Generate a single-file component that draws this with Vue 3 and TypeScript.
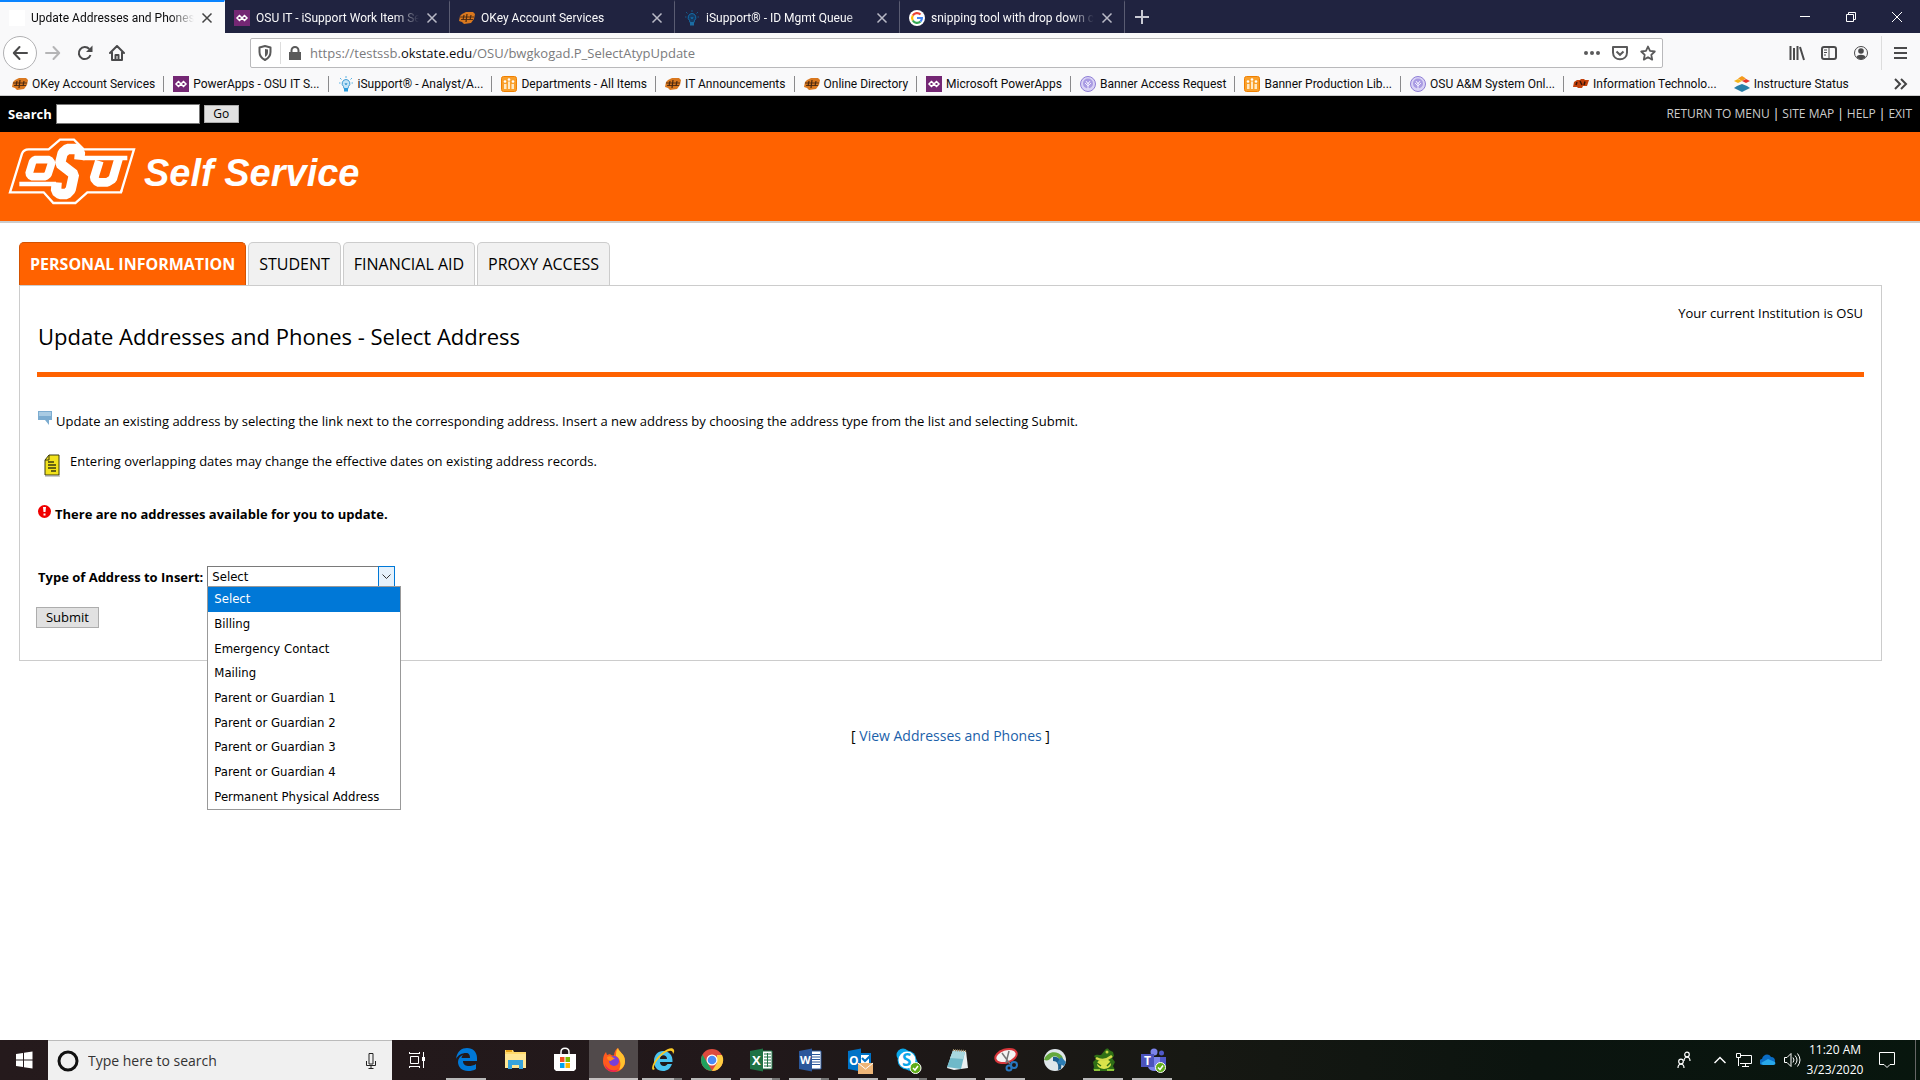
<script setup lang="ts">
import { ref } from 'vue'

interface BrowserTab { icon: string; title: string }
interface Bookmark { icon: string; title: string }
interface TaskApp { icon: string; name: string; open: boolean; stacked?: boolean; active?: boolean }

const okey = '<path d="M3 4l4-2h7l2 2-1 5-3 4-7 1-2-2-3-1 1-5z" fill="#d9781f"/><path d="M1 7h14M2 9.500h12" stroke="#5a3113" stroke-width="1.200"/><path d="M5 5l-1 5M8 4L7 12M12 5l-1 5" stroke="#4a2a12" stroke-width="1.200"/>'
const power = '<path d="M0 0h16v16H0z" fill="#742774"/><path d="M5.500 5.500L3 8l2.500 2.500L8 8zM10.500 5.500L8 8l2.500 2.500L13 8z" fill="none" stroke="#fff" stroke-width="1.500"/>'
const bulb = '<path d="M8 3.500a4 4 0 0 1 2.500 7l-.5 2H6l-.5-2A4 4 0 0 1 8 3.500z" fill="#c3e4f7" stroke="#3d9bd4"/><path d="M6 12h4v3.500H6z" fill="#2b9bdc"/><path d="M7 7l1 2 1-2" fill="none" stroke="#3d9bd4"/><path d="M8 0v2M2 2l1.500 1.500M14 2l-1.500 1.500M1 7h1.500M13.500 7H15" stroke="#5db4e4"/>'
const depts = '<rect x=".5" y=".5" width="15" height="15" rx="2" fill="#f9a02c" stroke="#f08000"/><path d="M3 13V8h2.500v5zM7 13V5.500h2V13zM10.500 13V8H13v5z" fill="#ffe9c6"/><circle cx="4" cy="5.500" r="1.300" fill="#fff"/><circle cx="8" cy="3.500" r="1.300" fill="#fff"/><circle cx="12" cy="5.500" r="1.300" fill="#fff"/>'
const seal = '<circle cx="8" cy="8" r="7.500" fill="#d9d2f5" stroke="#8f7ed6"/><circle cx="8" cy="7.500" r="5" fill="#a99be3"/><path d="M8 13V6M8 10L5 7M8 10l3-3M8 8L6 5M8 8l2-3" stroke="#efebff"/>'

const icons: Record<string, string> = {
  blank: '<path d="M0 0h16v16H0z" fill="#fff"/>',
  okey,
  power,
  bulb,
  depts,
  seal,
  bulbDark: '<path d="M8 3.500a4 4 0 0 1 2.500 7l-.5 2H6l-.5-2A4 4 0 0 1 8 3.500z" fill="#173a62" stroke="#1270ad"/><path d="M6 12h4v3.500H6z" fill="#1b6ca3"/><path d="M7 7l1 2 1-2" fill="none" stroke="#1270ad"/><path d="M8 0v2M2 2l1.500 1.500M14 2l-1.500 1.500M1 7h1.500M13.500 7H15" stroke="#155a89"/>',
  google: '<circle cx="8" cy="8" r="8" fill="#fff"/><g fill="none" stroke-width="2.200"><path d="M11.500 4.500A4.900 4.900 0 0 0 3.800 5.500" stroke="#ea4335"/><path d="M3.800 5.500a4.900 4.900 0 0 0 0 5" stroke="#fbbc05"/><path d="M3.800 10.500a4.900 4.900 0 0 0 7.700 1" stroke="#34a853"/><path d="M11.500 11.500A4.900 4.900 0 0 0 12.900 8H8" stroke="#4285f4"/></g>',
  brand: '<path d="M1 6l3-2h3l1-1h3l1 1h4l-2 6h-4l-1 2H5l-1-1H0z" fill="#c2410c"/><path d="M4 6l-1 3M7 5l2 4M12 5.500l-1 3.500" stroke="#3c1508" stroke-width="1.500"/>',
  instructure: '<path d="M8 0l4 2.500L8 5 4 2.500z" fill="#f59a1b"/><path d="M4 3l4 2-4 2-4-2z" fill="#f4b41a"/><path d="M12 3l4 2-4 2-4-2z" fill="#e6352c"/><path d="M3 10l5-2 5 2 3 2-8 4-8-4z" fill="#287ea8"/>',

  start: '<path d="M0 3l7-1v6.500H0zM8 1.800L16.500.5v8H8zM0 9.500h7V16l-7-1zM8 9.500h8.500v8L8 16.200z" fill="#fff"/>',
  edge: '<path d="M1 11C2 3 7 0 12 0c6 0 10 4 10 10v3H8c0 4 3 5 6 5 2 0 5-.5 7-2v5c-2 1.500-5 2-8 2-6 0-10-4-10-9 0-3 2-6 5-7-1 1-1.500 2-1.500 3H15c0-3-1-5-4-5C7 5 3 7 1 11z" fill="#0078d7"/>',
  explorer: '<path d="M1 2h8l1 2h12v16H1z" fill="#ffd96b"/><path d="M2 2h6v2H2z" fill="#e8a317"/><path d="M1 6h21v14H1z" fill="#ffe694"/><path d="M4 21v-9h15v9h-4v-4H8v4z" fill="#36a3dc"/>',
  store: '<path d="M8 7V4c0-5 8-5 8 0v3" fill="none" stroke="#fff" stroke-width="1.500"/><path d="M1 6h22v15l-2 2H3l-2-2z" fill="#fff"/><path d="M7 9h4.500v5H7z" fill="#f25022"/><path d="M12.500 9H17v5h-4.500z" fill="#7fba00"/><path d="M7 15h4.500v5H7z" fill="#00a4ef"/><path d="M12.500 15H17v5h-4.500z" fill="#ffb900"/>',
  firefox: '<path d="M12 24C5 24 1 19 1 13c0-4 1-7 3-9l1 3 3-1c1 1 2 1.500 4 1.500C12 4 14 1 16 0c1 4 7 6 7 13 0 6-4 11-11 11z" fill="#ff5a1f"/><path d="M16 0c1 4 7 6 7 13 0 5-3 8-6 9 3-6 1-12-3-14 0-3 0-6 2-8z" fill="#ffc22e"/><path d="M3 16c2 6 9 8 14 5l-4 3C7 24 3 21 3 16z" fill="#e51d5b"/><circle cx="12" cy="13" r="5" fill="#7a3fd8"/><path d="M5 9c3-2 6 0 8 2-3 0-3 2-5 2-2-1-3-2-3-4z" fill="#ff8a1c"/>',
  ie: '<path d="M12 3c6 0 10 4 9.500 11H9c0 5 6 5 7.500 2H21c-2 5-5 7-9 7-6 0-9-4-9-10S7 3 12 3zM9 11h7c0-5-7-5-7 0z" fill="#49c4f2"/><path d="M2 22C-1 20 4 10 12 4c5-4 10-5 11-2 .5 1 0 3-1 4 0-6-7-3-12 2C5 13 1 20 4 21z" fill="#fbc926"/>',
  chrome: '<circle cx="12" cy="12" r="11" fill="#dd4b3e"/><path d="M2.500 6.500L8 16l4 7A11 11 0 0 1 2.500 6.500z" fill="#1fa15d"/><path d="M12 23l5-8V7h5a11 11 0 0 1-10 16z" fill="#ffcd42"/><circle cx="12" cy="12" r="5.500" fill="#fff"/><circle cx="12" cy="12" r="4.300" fill="#4c8bf5"/>',
  excel: '<path d="M12 3h11v18H12z" fill="#fff" stroke="#1f7244"/><path d="M15 6h7M15 9h7M15 12h7M15 15h7M15 18h7M18.500 5v14" stroke="#1f7244"/><path d="M1 3l13-2.500v23L1 21z" fill="#1f7244"/><text x="3" y="16.500" font-family="Open Sans, sans-serif" font-weight="700" font-size="13" fill="#fff">X</text>',
  word: '<path d="M12 3h11v18H12z" fill="#fff" stroke="#2b579a"/><path d="M14 6.500h8M14 9h8M14 11.500h8M14 14h8M14 16.500h8" stroke="#2b579a"/><path d="M1 3l13-2.500v23L1 21z" fill="#2b579a"/><text x="2" y="16" font-family="Open Sans, sans-serif" font-weight="700" font-size="11" fill="#fff">W</text>',
  outlook: '<path d="M12 6h11v12H12z" fill="#fff"/><path d="M12 6h11v12H12zM15 10l3 3 5-5" fill="none" stroke="#0072c6" stroke-width="2"/><path d="M1 3l13-2.500v23L1 21z" fill="#0072c6"/><text x="2" y="16.500" font-family="Open Sans, sans-serif" font-weight="700" font-size="12" fill="#fff">O</text><path d="M11 15h15v11H11z" fill="#eeb678"/><path d="M11 15l7.500 6 7.500-6" fill="none" stroke="#fff"/>',
  skype: '<circle cx="7" cy="7" r="6.500" fill="#0aa7ea"/><circle cx="15" cy="16" r="7" fill="#0aa7ea"/><circle cx="11" cy="12" r="9.500" fill="#0aa7ea"/><circle cx="11" cy="12" r="8.500" fill="#fff"/><text x="6" y="18" font-family="Open Sans, sans-serif" font-weight="700" font-size="17" fill="#0aa7ea">S</text><circle cx="19.500" cy="20" r="5.500" fill="#5fad18" stroke="#fff"/><path d="M17 20l2 2 3-4" fill="none" stroke="#fff" stroke-width="1.500"/>',
  notepad: '<path d="M8 2l13 1 2 17-14 2-7-2z" fill="#e9eff1"/><path d="M8 3l12 1-4 17-14-2z" fill="#6fb9c9"/><path d="M8 3l12 1-2 7-13-1z" fill="#a8d8e0"/><path d="M8 2l13 1" stroke="#9b8a63" stroke-width="2" stroke-dasharray="1 1"/>',
  snip: '<ellipse cx="12" cy="8" rx="11" ry="6.500" transform="rotate(-18 12 8)" fill="#f3f3f3" stroke="#d8363b" stroke-width="2"/><path d="M8 5l8 11M15 3l-3 12" stroke="#777" stroke-width="1.500"/><circle cx="20" cy="17" r="3" fill="none" stroke="#2877bf" stroke-width="2"/><circle cx="15" cy="20" r="2.500" fill="none" stroke="#2877bf" stroke-width="2"/>',
  globe: '<circle cx="12" cy="12" r="11" fill="#dfe6ea"/><path d="M1 12C4 3 14 2 19 8l2 5-4-1c-2-4-6-5-9-2-2 2-3 3-7 2z" fill="#64a83c"/><path d="M10 9c5-1 10 3 8 12l-3 1c1-6-1-9-5-9z" fill="#1d5f8e"/><path d="M14 15l4-6 5 5-2 4z" fill="#2c7db5"/>',
  frog: '<path d="M2 8c2-2 5-1 7-1l4-5c1-2 4-2 4 0l4 2 1 4-2 2 3 4-2 4 2 4-6 1H8l-7-1 1-3-1-5 3-3z" fill="#2f6f16"/><ellipse cx="12" cy="16" rx="7" ry="5" fill="#dbe34b"/><path d="M4 10c5 3 11 2 16-2" stroke="#d5db4a" stroke-width="2.500" fill="none"/><circle cx="15" cy="4" r="1.500" fill="#c9d645"/><path d="M5 15l4 3M19 14l-4 4" stroke="#2f6f16" stroke-width="1.500"/><path d="M2 22h6M15 22h7" stroke="#8fc53a" stroke-width="2"/>',
  teams: '<circle cx="13" cy="4" r="3.500" fill="#7b83eb"/><circle cx="20.500" cy="5" r="2.500" fill="#5059c9"/><path d="M16 9h9v8c0 4-6 5-7 2z" fill="#5059c9"/><path d="M7 9h12v9c0 6-10 7-12 1z" fill="#7b83eb"/><path d="M0 6h13v13H0z" fill="#4b53bc"/><text x="3" y="17" font-family="Open Sans, sans-serif" font-weight="700" font-size="12" fill="#fff">T</text><circle cx="19.500" cy="19.500" r="5" fill="#5fad18" stroke="#fff"/><path d="M17 19.500l2 2 3-4" fill="none" stroke="#fff" stroke-width="1.500"/>'
}

const browserTabs: BrowserTab[] = [
  { icon: 'blank', title: 'Update Addresses and Phones -' },
  { icon: 'power', title: 'OSU IT - iSupport Work Item Se' },
  { icon: 'okey', title: 'OKey Account Services' },
  { icon: 'bulbDark', title: 'iSupport® - ID Mgmt Queue' },
  { icon: 'google', title: 'snipping tool with drop down c' }
]

const bookmarks: Bookmark[] = [
  { icon: 'okey', title: 'OKey Account Services' },
  { icon: 'power', title: 'PowerApps - OSU IT S...' },
  { icon: 'bulb', title: 'iSupport® - Analyst/A...' },
  { icon: 'depts', title: 'Departments - All Items' },
  { icon: 'okey', title: 'IT Announcements' },
  { icon: 'okey', title: 'Online Directory' },
  { icon: 'power', title: 'Microsoft PowerApps' },
  { icon: 'seal', title: 'Banner Access Request' },
  { icon: 'depts', title: 'Banner Production Lib...' },
  { icon: 'seal', title: 'OSU A&M System Onl...' },
  { icon: 'brand', title: 'Information Technolo...' },
  { icon: 'instructure', title: 'Instructure Status' }
]

const siteTabs = ['PERSONAL INFORMATION', 'STUDENT', 'FINANCIAL AID', 'PROXY ACCESS']
const headerLinks = ['RETURN TO MENU', 'SITE MAP', 'HELP', 'EXIT']

const addressTypes = [
  'Select',
  'Billing',
  'Emergency Contact',
  'Mailing',
  'Parent or Guardian 1',
  'Parent or Guardian 2',
  'Parent or Guardian 3',
  'Parent or Guardian 4',
  'Permanent Physical Address'
]
const chosen = ref('Select')

const apps: TaskApp[] = [
  { icon: 'edge', name: 'Microsoft Edge', open: true },
  { icon: 'explorer', name: 'File Explorer', open: false },
  { icon: 'store', name: 'Microsoft Store', open: false },
  { icon: 'firefox', name: 'Firefox', open: true, active: true },
  { icon: 'ie', name: 'Internet Explorer', open: true, stacked: true },
  { icon: 'chrome', name: 'Google Chrome', open: true },
  { icon: 'excel', name: 'Excel', open: true, stacked: true },
  { icon: 'word', name: 'Word', open: true, stacked: true },
  { icon: 'outlook', name: 'Outlook', open: true },
  { icon: 'skype', name: 'Skype for Business', open: true, stacked: true },
  { icon: 'notepad', name: 'Notepad', open: true },
  { icon: 'snip', name: 'Snipping Tool', open: true },
  { icon: 'globe', name: 'AnyConnect', open: false },
  { icon: 'frog', name: 'Toad', open: true },
  { icon: 'teams', name: 'Microsoft Teams', open: true }
]
</script>

<template>
  <div class="screen">
    <header class="browser">
      <div class="tabstrip">
        <div v-for="(tab, i) in browserTabs" :key="tab.title" class="tab" :class="{ current: i === 0 }">
          <svg class="fav" viewBox="0 0 16 16" v-html="icons[tab.icon]"></svg>
          <span class="tab-title">{{ tab.title }}</span>
          <button class="plain" aria-label="Close tab">
            <svg width="12" height="12" viewBox="0 0 12 12"><path d="M1.500 1.500l9 9M10.500 1.500l-9 9" stroke="currentColor" stroke-width="1.500" /></svg>
          </button>
        </div>
        <button class="plain new-tab" aria-label="New tab">
          <svg width="14" height="14" viewBox="0 0 14 14"><path d="M7 0v14M0 7h14" stroke="currentColor" stroke-width="2" /></svg>
        </button>
        <div class="window-buttons">
          <button class="plain" aria-label="Minimize"><svg width="10" height="10" viewBox="0 0 10 10"><path d="M0 4.500h10" stroke="#fff" /></svg></button>
          <button class="plain" aria-label="Restore"><svg width="10" height="10" viewBox="0 0 10 10"><path d="M.5 2.500h7v7h-7zM2.500 2.500v-2h7v7h-2" fill="none" stroke="#fff" /></svg></button>
          <button class="plain" aria-label="Close"><svg width="10" height="10" viewBox="0 0 10 10"><path d="M0 0l10 10M10 0L0 10" stroke="#fff" /></svg></button>
        </div>
      </div>

      <div class="toolbar">
        <div class="nav-buttons">
          <button class="plain back" aria-label="Back"><svg width="16" height="16" viewBox="0 0 16 16"><path d="M15 8H2M7.500 2L1.800 8l5.700 6" fill="none" stroke="currentColor" stroke-width="2" stroke-linecap="round" stroke-linejoin="round" /></svg></button>
          <button class="plain forward" aria-label="Forward"><svg width="16" height="16" viewBox="0 0 16 16"><path d="M1 8h13M8.500 2l5.700 6-5.700 6" fill="none" stroke="currentColor" stroke-width="2" stroke-linecap="round" stroke-linejoin="round" /></svg></button>
          <button class="plain" aria-label="Reload"><svg width="16" height="16" viewBox="0 0 16 16"><path d="M13.500 10A6 6 0 1 1 12.300 4" fill="none" stroke="currentColor" stroke-width="2" /><path d="M15.500.5v6.500H9z" fill="currentColor" /></svg></button>
          <button class="plain" aria-label="Home"><svg width="16" height="16" viewBox="0 0 16 16"><path d="M1 8l7-7 7 7M3 7.500V15h10V7.500M6.500 15v-5h3v5" fill="none" stroke="currentColor" stroke-width="2" stroke-linejoin="round" stroke-linecap="round" /></svg></button>
        </div>
        <div class="urlbar">
          <svg width="14" height="16" viewBox="0 0 14 16"><path d="M7 1l5.500 1.500v4.500c0 4-2.500 6.500-5.500 8-3-1.500-5.500-4-5.500-8V2.500z" fill="none" stroke="#5a5a5a" stroke-width="2" stroke-linejoin="round" /><path d="M7 4v8c2-1 3-3 3-5V4.500z" fill="#5a5a5a" /></svg>
          <span class="url-rule"></span>
          <svg width="12" height="14" viewBox="0 0 12 14"><path d="M0 6h12v8H0z" fill="#5a5a5a" /><path d="M2.500 7V4.500a3.500 3.500 0 0 1 7 0V7" fill="none" stroke="#5a5a5a" stroke-width="2" /></svg>
          <span class="url">https://testssb.<b>okstate.edu</b>/OSU/bwgkogad.P_SelectAtypUpdate</span>
          <button class="plain" aria-label="Page actions"><svg width="16" height="16" viewBox="0 0 16 16"><g fill="currentColor"><circle cx="2" cy="8" r="2" /><circle cx="8" cy="8" r="2" /><circle cx="14" cy="8" r="2" /></g></svg></button>
          <button class="plain" aria-label="Save to Pocket"><svg width="16" height="16" viewBox="0 0 16 16"><path d="M1 2h14v5.500c0 9-14 9-14 0z" fill="none" stroke="currentColor" stroke-width="2" stroke-linejoin="round" /><path d="M4.500 6.500L8 9.800l3.500-3.300" fill="none" stroke="currentColor" stroke-width="2" /></svg></button>
          <button class="plain" aria-label="Bookmark this page"><svg width="16" height="16" viewBox="0 0 16 16"><path d="M8 1.500l2 4.400 4.800.6-3.500 3.300.9 4.800L8 12.200l-4.200 2.400.9-4.800L1.200 6.500 6 5.900z" fill="none" stroke="currentColor" stroke-width="1.800" stroke-linejoin="round" /></svg></button>
        </div>
        <div class="tool-buttons">
          <button class="plain" aria-label="Library"><svg width="16" height="16" viewBox="0 0 16 16"><path d="M1.500 1v14M5 3v12M8.500 1v14M11 2l4 13" stroke="currentColor" stroke-width="2" /></svg></button>
          <button class="plain" aria-label="Sidebars"><svg width="16" height="16" viewBox="0 0 16 16"><rect x="1" y="2" width="14" height="12" rx="2" fill="none" stroke="currentColor" stroke-width="2" /><path d="M8 2v12M3 5h3M3 7.500h3M3 10h2" stroke="currentColor" /></svg></button>
          <button class="plain" aria-label="Account"><svg width="16" height="16" viewBox="0 0 16 16"><circle cx="8" cy="8" r="6.500" fill="none" stroke="currentColor" /><circle cx="8" cy="6" r="2.800" fill="currentColor" /><path d="M3.500 12c1-3 8-3 9 0-2 3-7 3-9 0z" fill="currentColor" /></svg></button>
          <span class="tool-rule"></span>
          <button class="plain" aria-label="Menu"><svg width="14" height="14" viewBox="0 0 14 14"><path d="M0 2h13M0 7h13M0 12h13" stroke="currentColor" stroke-width="2" /></svg></button>
        </div>
      </div>

      <nav class="bookmarks" aria-label="Bookmarks">
        <a v-for="b in bookmarks" :key="b.title" href="#" class="bookmark">
          <svg class="fav" viewBox="0 0 16 16" v-html="icons[b.icon]"></svg><span>{{ b.title }}</span>
        </a>
        <button class="plain more" aria-label="More bookmarks"><svg width="14" height="12" viewBox="0 0 14 12"><path d="M1 1l5 5-5 5M7 1l5 5-5 5" fill="none" stroke="currentColor" stroke-width="2" /></svg></button>
      </nav>
    </header>

    <main class="page">
      <div class="search-strip">
        <form class="site-search" @submit.prevent>
          <label for="site-search">Search</label>
          <input id="site-search" type="text" />
          <button type="submit">Go</button>
        </form>
        <nav class="header-links">
          <template v-for="(link, i) in headerLinks" :key="link">
            <span v-if="i" class="bar">|</span><a href="#">{{ link }}</a>
          </template>
        </nav>
      </div>

      <div class="banner">
        <svg class="osu" viewBox="24 20 384 204" role="img" aria-label="OSU">
          <path d="M30 186L66 70Q71 57 86 57H146L180 28H222L251 57H402L363 186H262L226 218H160L131 186Z" fill="none" stroke="#fff" stroke-width="7" />
          <g fill="none" stroke="#fff" stroke-linejoin="bevel">
            <path d="M104 88H148L155 98L144 132L136 139H94L87 130L98 94Z" stroke-width="23" />
            <path d="M238 88L240 66L229 56H202L188 68L180 100L222 132L212 178L200 191H180L168 182L170 156" stroke-width="31" />
            <path d="M248 83H382M58 161H168" stroke-width="14" />
            <path d="M298 92L282 144L292 156H322L338 146L356 84" stroke-width="26" />
            <circle cx="364" cy="182" r="3" stroke-width="2" />
          </g>
        </svg>
        <span class="brand-name">Self Service</span>
      </div>

      <div class="content">
        <nav class="site-tabs">
          <a v-for="(t, i) in siteTabs" :key="t" href="#" :class="{ selected: i === 0 }">{{ t }}</a>
        </nav>
        <section class="panel">
          <p class="institution">Your current Institution is OSU</p>
          <h1>Update Addresses and Phones - Select Address</h1>
          <hr />
          <p class="line info">
            <svg width="14" height="14" viewBox="0 0 14 14"><path d="M0 0h14v9h-3v5L7 9H0z" fill="#7cacd0" /><path d="M1 1h12v4H1z" fill="#a9cbe3" /></svg>
            <span>Update an existing address by selecting the link next to the corresponding address. Insert a new address by choosing the address type from the list and selecting Submit.</span>
          </p>
          <p class="line note">
            <svg width="16" height="23" viewBox="0 0 16 23"><path d="M5 1h10v20H1V6z" fill="#f2e21c" stroke="#3a3a10" /><path d="M1 6h4V1" fill="none" stroke="#3a3a10" /><path d="M4 8h6M4 11h8M4 14h8M7 17h5" stroke="#3a3a10" stroke-width="1.500" /><path d="M1 22h15" stroke="#999" /></svg>
            <span>Entering overlapping dates may change the effective dates on existing address records.</span>
          </p>
          <p class="line warning">
            <svg width="13" height="13" viewBox="0 0 13 13"><circle cx="6.500" cy="6.500" r="6.500" fill="#f00000" /><path d="M5 2h3l-.5 5h-2zM5.500 8.500h2v2h-2z" fill="#fff" /></svg>
            <span>There are no addresses available for you to update.</span>
          </p>
          <form @submit.prevent>
            <div class="field">
              <label for="address-type">Type of Address to Insert:</label>
              <div class="combo">
                <select id="address-type" v-model="chosen">
                  <option v-for="t in addressTypes" :key="t">{{ t }}</option>
                </select>
                <span class="arrow"><svg width="9" height="6" viewBox="0 0 9 6"><path d="M.5.5l4 4 4-4" fill="none" stroke="#333" /></svg></span>
                <ul class="menu" role="listbox" aria-label="Type of Address to Insert">
                  <li v-for="t in addressTypes" :key="t" role="option" :aria-selected="t === chosen" @click="chosen = t">{{ t }}</li>
                </ul>
              </div>
            </div>
            <button class="submit" type="submit">Submit</button>
          </form>
        </section>
        <p class="foot-link">[ <a href="#">View Addresses and Phones</a> ]</p>
      </div>
    </main>

    <footer class="taskbar">
      <button class="plain start" aria-label="Start"><svg width="17" height="18" viewBox="0 0 17 18" v-html="icons.start"></svg></button>
      <div class="task-search">
        <svg width="22" height="22" viewBox="0 0 22 22"><circle cx="11" cy="11" r="9" fill="none" stroke="#111" stroke-width="3" /></svg>
        <input type="text" placeholder="Type here to search" aria-label="Type here to search" />
        <svg width="12" height="18" viewBox="0 0 12 18"><path d="M4 1.500h4V12H4zM1.500 9v4.500h9V9M6 13.500V17M3.500 16.500h5" fill="none" stroke="#222" /></svg>
      </div>
      <button class="plain task-view" aria-label="Task View"><svg width="18" height="18" viewBox="0 0 18 18"><path d="M2.500 5.500h8v7h-8zM1 2.500h11M1 15.500h11M1.500 1v2M11.500 1v2M1.500 15v2M11.500 15v2M15.500 1v16" fill="none" stroke="#fff" /><path d="M14 6h3v4h-3z" fill="#fff" /></svg></button>
      <button v-for="a in apps" :key="a.name" class="plain app" :class="{ open: a.open, active: a.active, stacked: a.stacked }" :aria-label="a.name">
        <svg width="24" height="24" viewBox="0 0 24 24" overflow="visible" v-html="icons[a.icon]"></svg>
      </button>
      <div class="tray">
        <svg class="people" width="16" height="18" viewBox="0 0 16 18"><path d="M2 17c0-5 6-5 6 0M8 10c0-5 6-5 6 0" fill="none" stroke="#fff" stroke-width="1.200" /><circle cx="5" cy="10.500" r="2.300" fill="none" stroke="#fff" stroke-width="1.200" /><circle cx="11" cy="3.500" r="2.300" fill="none" stroke="#fff" stroke-width="1.200" /></svg>
        <svg class="chevron" width="12" height="8" viewBox="0 0 12 8"><path d="M.5 7L6 1.500 11.500 7" fill="none" stroke="#fff" stroke-width="1.500" /></svg>
        <svg width="16" height="16" viewBox="0 0 16 16"><path d="M4 3.500h11.500v8H4M9.500 12v3M6 14.500h7M.5 1.500h4v4h-4zM2.500 6v8" fill="none" stroke="#fff" /></svg>
        <svg width="16" height="12" viewBox="0 0 16 12"><path d="M3 11a3 3 0 0 1-1-6c1-5 7-6 9-2 3 0 4 2 4 4l-1 4z" fill="#0a6cc4" /><path d="M1 9l7-4 7 3c1 2 0 3-2 3H3z" fill="#28a8ea" /></svg>
        <svg width="17" height="16" viewBox="0 0 17 16"><path d="M.5 5.500H3l4-4v13l-4-4H.5zM9 5.500q2 2.500 0 5M11 3.500q4 4.500 0 9M13.500 1.500q5 6.500 0 13" fill="none" stroke="#fff" /></svg>
        <div class="clock"><span>11:20 AM</span><span>3/23/2020</span></div>
        <svg class="notice" width="16" height="17" viewBox="0 0 16 17"><path d="M.5.5h15v12H11l-3 3-3-3H.5z" fill="none" stroke="#fff" /></svg>
        <span class="desktop-edge"></span>
      </div>
    </footer>
  </div>
</template>

<style>
body { margin: 0; }
</style>

<style scoped>
.screen {
  display: flex;
  flex-direction: column;
  min-height: 100vh;
  background: #fff;
  color: #000;
  font-family: "Open Sans", "Noto Sans", sans-serif;
  font-size: 13px;
  line-height: 18px;
}
.screen * { box-sizing: border-box; }
a { color: inherit; text-decoration: none; }
p, h1, ul { margin: 0; padding: 0; }
svg { flex: none; display: block; }
button, input, select { font: inherit; color: inherit; }
.plain {
  display: flex;
  align-items: center;
  justify-content: center;
  flex: none;
  padding: 0;
  border: 0;
  background: none;
}
.fav { width: 16px; height: 16px; }

.browser { background: #f9f9fa; color: #0c0c0d; font-family: Roboto, "Open Sans", sans-serif; font-size: 12px; border-bottom: 1px solid #ccc; }
.tabstrip { display: flex; height: 33px; background: #202340; color: #f9f9fa; }
.tab {
  display: flex;
  align-items: center;
  flex: 0 1 225px;
  min-width: 0;
  padding: 0 10px 0 9px;
  gap: 6px;
  border-right: 1px solid #5a5c72;
  border-top: 2px solid transparent;
}
.tab.current { background: #f9f9fa; color: #0c0c0d; border-top-color: #0a84ff; border-right-color: #f9f9fa; }
.tab .plain { color: #b9bac6; width: 14px; }
.tab.current .plain { color: #444; }
.tab-title {
  flex: 1;
  min-width: 0;
  white-space: nowrap;
  mask-image: linear-gradient(to left, transparent, #000 24px);
}
.new-tab { width: 34px; color: #c9cad4; }
.window-buttons { display: flex; margin-left: auto; }
.window-buttons .plain { width: 46px; }

.toolbar { display: flex; align-items: center; height: 39px; color: #4a4a4b; }
.nav-buttons { display: flex; align-items: center; flex: none; width: 250px; padding-left: 3px; }
.nav-buttons .plain { width: 32px; }
.nav-buttons .back { width: 34px; height: 34px; border: 1px solid #b1b1b3; border-radius: 50%; background: #fff; }
.nav-buttons .forward { color: #b5b5b6; }
.urlbar {
  display: flex;
  align-items: center;
  flex: 1;
  height: 30px;
  padding: 0 4px 0 7px;
  gap: 8px;
  background: #fff;
  border: 1px solid #b9b9bb;
  border-radius: 2px;
}
.url-rule { width: 1px; height: 22px; background: #ddd; }
.url { flex: 1; margin-left: 1px; font-family: "Open Sans", "Noto Sans", sans-serif; font-size: 13px; color: #7b7b7d; }
.url b { font-weight: 400; color: #0c0c0d; }
.urlbar .plain { width: 20px; color: #5a5a5b; }
.tool-buttons { display: flex; align-items: center; justify-content: flex-end; gap: 16px; width: 257px; padding-right: 12px; }
.tool-rule { width: 1px; height: 34px; margin: 0 -4px; background: #ddd; }

.bookmarks { display: flex; align-items: center; height: 23px; padding: 0 12px; }
.bookmark { display: flex; align-items: center; gap: 4px; padding-right: 8px; margin-right: 9px; white-space: nowrap; }
.bookmark:nth-child(-n+10) { border-right: 1px solid #8a8a8c; }
.bookmark span { line-height: 16px; }
.more { margin-left: auto; color: #444; }

.page { flex: 1; }
.search-strip { display: flex; align-items: center; justify-content: space-between; height: 36px; padding: 0 8px; background: #000; color: #fff; font-size: 12px; }
.site-search { display: flex; align-items: center; gap: 4px; }
.site-search label { font-size: 13px; font-weight: 700; }
.site-search input { width: 144px; height: 20px; padding: 0 4px; border: 1px solid #777; background: #fff; color: #000; }
.site-search button { width: 35px; height: 18px; padding: 0; border: 1px solid #adadad; background: #e1e1e1; color: #000; line-height: 14px; }
.header-links { display: flex; gap: 3px; color: #ccc; }
.bar { color: #fff; }

.banner { display: flex; align-items: center; gap: 8px; height: 91px; padding: 0 8px 12px; background: #ff6200; border-bottom: 2px solid #ccc; }
.osu { width: 128px; height: 68px; }
.brand-name { padding-top: 4px; color: #fff; font: italic 700 38px/44px "Liberation Sans", Arial, sans-serif; }

.content { padding: 19px 38px 0 19px; }
.site-tabs { display: flex; gap: 2px; }
.site-tabs a {
  height: 43px;
  padding: 0 10px;
  border: 1px solid #ccc;
  border-bottom: 0;
  border-radius: 5px 5px 0 0;
  background: #f1f1f1;
  font-size: 16px;
  line-height: 42px;
}
.site-tabs .selected { background: #ff6200; border-color: #d45200; color: #fff; font-weight: 700; }
.panel { padding: 18px 17px 32px; border: 1px solid #ccc; }
.institution { text-align: right; padding-right: 1px; }
h1 { font-size: 22px; line-height: 28px; font-weight: 400; padding-left: 1px; }
hr { height: 5px; margin: 22px 0 34px; border: 0; background: #ff6200; }
.line { display: flex; gap: 4px; padding-left: 1px; }
.info { align-items: flex-start; }
.info span { padding-top: 1px; }
.note { gap: 10px; padding: 22px 0 0 7px; }
.note svg { margin-top: 2px; }
.warning { margin-top: 28px; font-weight: 700; }
.field { display: flex; align-items: center; gap: 4px; margin-top: 43px; padding-left: 1px; }
.field label { font-weight: 700; }
.combo { position: relative; width: 188px; height: 21px; font-family: "DejaVu Sans Condensed", "Open Sans", sans-serif; font-size: 13px; }
.combo select {
  width: 100%;
  height: 100%;
  padding: 1px 24px 0 4px;
  border: 1px solid #7a7a7a;
  border-radius: 0;
  background: #fff;
  appearance: none;
  line-height: 16px;
}
.arrow { position: absolute; top: 0; right: 0; display: flex; align-items: center; justify-content: center; width: 17px; height: 21px; border: 1px solid #0078d7; background: #e5f1fb; pointer-events: none; }
.menu { position: absolute; top: 20px; left: 0; z-index: 2; display: flex; flex-direction: column; width: 194px; height: 224px; border: 1px solid #999; background: #fff; list-style: none; }
.menu li { display: flex; flex: 1; align-items: center; padding-left: 6px; }
.menu [aria-selected="true"] { background: #0078d7; color: #fff; }
.submit { display: block; width: 63px; height: 21px; margin: 20px 0 0 -1px; padding: 0; border: 1px solid #adadad; background: #e1e1e1; font-size: 13px; line-height: 17px; }
.foot-link { margin-top: 65px; text-align: center; font-size: 14px; line-height: 20px; }
.foot-link a { color: #1b5faa; }

.taskbar { display: flex; height: 40px; background: linear-gradient(to right, #251a1c, #21181a 40%, #171813 62%, #0b140f 80%, #08160e); color: #fff; }
.start { width: 48px; }
.task-search { display: flex; align-items: center; width: 344px; padding: 0 15px 0 9px; background: #f0f0f0; border-top: 1px solid #bbb; }
.task-search input { flex: 1; min-width: 0; margin-left: 9px; padding: 0; border: 0; background: none; outline: 0; font-size: 14px; color: #333; }
.task-search input::placeholder { color: #333; opacity: 1; }
.task-view { width: 50px; }
.app { width: 49px; padding-top: 2px; border-bottom: 2px solid transparent; }
.app.open { background: linear-gradient(#b8b8b8, #b8b8b8) no-repeat 4px 100% / 40px 2px; background-origin: border-box; background-clip: border-box; }
.app.stacked { background-image: linear-gradient(to right, #b8b8b8 32px, #777 32px); }
.app.active { background: #514a4b; border-bottom-color: #c4c0c0; }
.tray { display: flex; align-items: center; margin-left: auto; gap: 8px; }
.people { margin-right: 14px; }
.chevron { margin-right: 2px; }
.clock { display: flex; flex-direction: column; align-items: center; width: 52px; font-size: 12px; line-height: 20px; white-space: nowrap; }
.notice { margin: 0 12px 0 10px; }
.desktop-edge { width: 5px; height: 40px; border-left: 1px solid #666; }
</style>
